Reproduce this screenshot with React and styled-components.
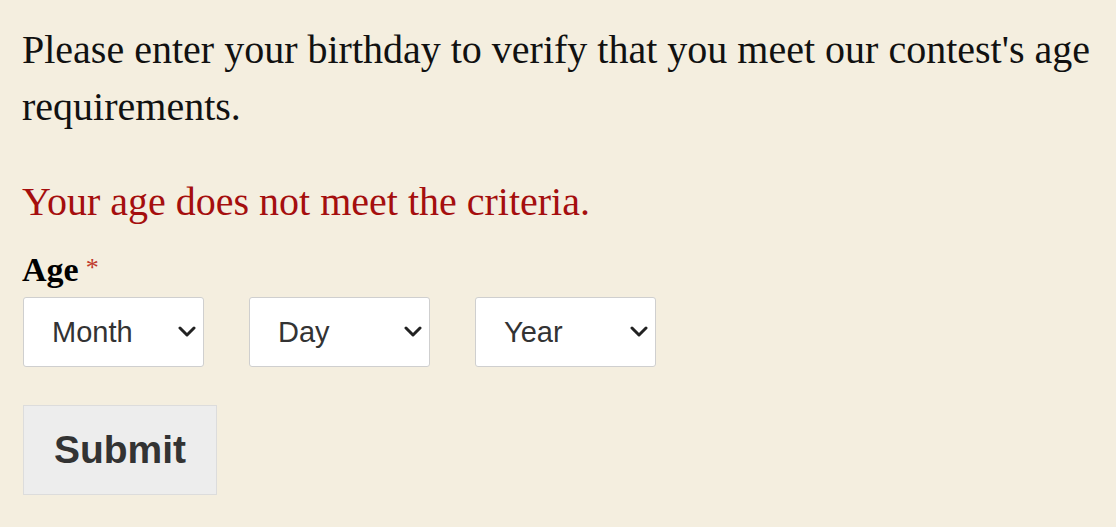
import React, { useState } from "react";
import styled, { createGlobalStyle } from "styled-components";

const GlobalStyle = createGlobalStyle`
  html, body {
    margin: 0;
    padding: 0;
    background: #f4eedf;
  }
`;

const Page = styled.div`
  padding: 21px 12px 22px 22px;
  font-family: "Liberation Serif", "DejaVu Serif", serif;
  color: #111;
`;

const Intro = styled.p`
  margin: 0;
  font-size: 40px;
  line-height: 57px;
`;

const ErrorText = styled.p`
  margin: 38px 0 0;
  font-size: 40px;
  line-height: 57px;
  color: #a50e0e;
`;

const Label = styled.label`
  display: block;
  margin-top: 19px;
  font-size: 34px;
  line-height: 37px;
  font-weight: bold;
  color: #000;
`;

const Required = styled.span`
  margin-left: 7px;
  font-size: 26px;
  font-weight: normal;
  color: #c0392b;
  vertical-align: 5px;
`;

const SelectRow = styled.div`
  display: flex;
  gap: 45px;
  margin-top: 9px;
  padding-left: 1px;
`;

const SelectWrap = styled.div`
  position: relative;
  width: 181px;
  height: 70px;
`;

const Select = styled.select`
  appearance: none;
  -webkit-appearance: none;
  box-sizing: border-box;
  width: 100%;
  height: 100%;
  padding: 0 30px 0 28px;
  border: 1px solid #cfcfcf;
  border-radius: 3px;
  background: #fff;
  color: #333;
  font-family: "Liberation Sans", Arial, sans-serif;
  font-size: 29px;
  outline: none;
`;

const Chevron = styled.svg`
  position: absolute;
  right: 8px;
  top: 29px;
  width: 18px;
  height: 11px;
  pointer-events: none;
`;

const SubmitButton = styled.button`
  display: block;
  box-sizing: border-box;
  margin: 38px 0 0 1px;
  width: 194px;
  height: 90px;
  border: 1px solid #dcdcdc;
  border-radius: 0;
  background: #ededed;
  color: #333;
  font-family: "Liberation Sans", Arial, sans-serif;
  font-size: 39px;
  font-weight: bold;
  cursor: pointer;
`;

const months = ["January", "February", "March", "April", "May", "June", "July",
  "August", "September", "October", "November", "December"];
const days = Array.from({ length: 31 }, (_, i) => i + 1);
const years = Array.from({ length: 100 }, (_, i) => 2024 - i);

const DateSelect = ({ placeholder, options, value, onChange }) => (
  <SelectWrap>
    <Select value={value} onChange={(e) => onChange(e.target.value)}>
      <option value="">{placeholder}</option>
      {options.map((o) => (
        <option key={o} value={o}>{o}</option>
      ))}
    </Select>
    <Chevron viewBox="0 0 18 11">
      <path d="M2 2l7 7 7-7" fill="none" stroke="#222" strokeWidth="3" strokeLinecap="round" strokeLinejoin="round" />
    </Chevron>
  </SelectWrap>
);

const App = () => {
  const [month, setMonth] = useState("");
  const [day, setDay] = useState("");
  const [year, setYear] = useState("");

  return (
    <Page>
      <GlobalStyle />
      <Intro>
        Please enter your birthday to verify that you meet our contest's age requirements.
      </Intro>
      <ErrorText>Your age does not meet the criteria.</ErrorText>
      <form onSubmit={(e) => e.preventDefault()}>
        <Label>
          Age<Required>*</Required>
        </Label>
        <SelectRow>
          <DateSelect placeholder="Month" options={months} value={month} onChange={setMonth} />
          <DateSelect placeholder="Day" options={days} value={day} onChange={setDay} />
          <DateSelect placeholder="Year" options={years} value={year} onChange={setYear} />
        </SelectRow>
        <SubmitButton type="submit">Submit</SubmitButton>
      </form>
    </Page>
  );
};

export default App;
